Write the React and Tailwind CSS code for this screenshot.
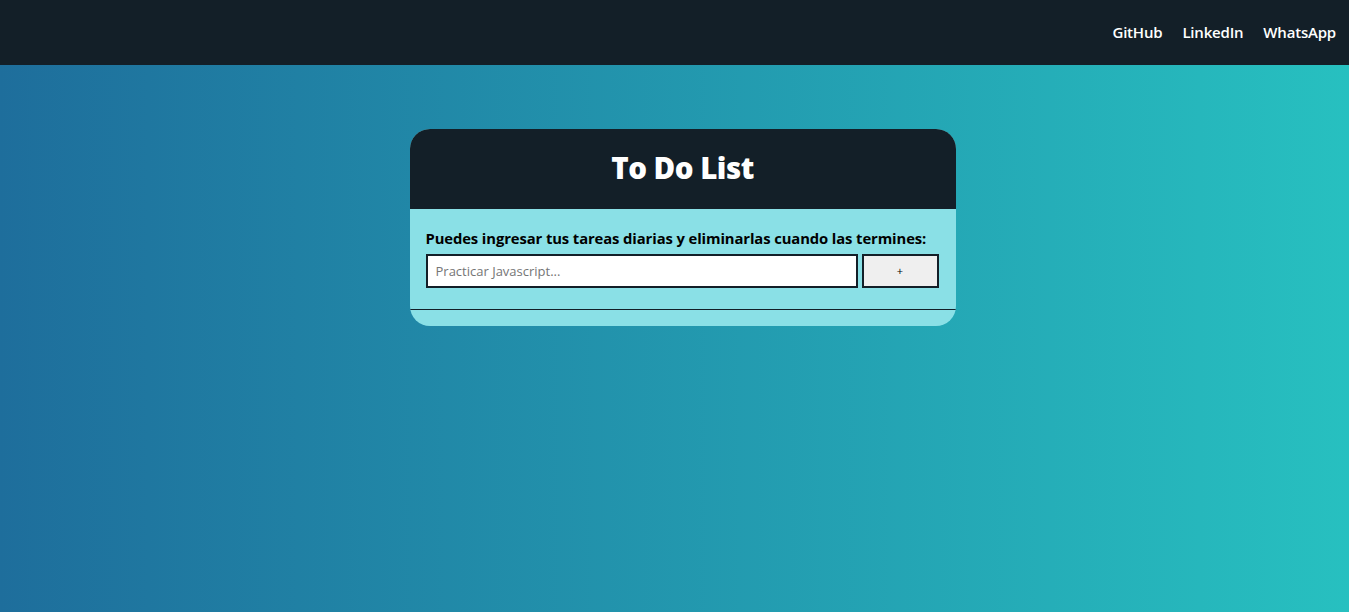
export default function App() {
  return (
    <div className="min-h-[612px] h-[612px] w-full flex flex-col bg-[linear-gradient(to_right,#1e6e9c,#27c0c0)] font-['Open_Sans',sans-serif]">
      <header className="h-[65px] shrink-0 bg-[#131f28] flex items-center justify-end pr-[13px] gap-[20px]">
        <a className="text-white text-[15px] font-semibold tracking-[-0.2px]">GitHub</a>
        <a className="text-white text-[15px] font-semibold tracking-[-0.2px]">LinkedIn</a>
        <a className="text-white text-[15px] font-semibold tracking-[-0.2px]">WhatsApp</a>
      </header>
      <main className="flex justify-center pt-[64px] pl-[16px]">
        <div className="w-[546px] rounded-[20px] overflow-hidden bg-[#8ae0e6]">
          <div className="h-[80px] bg-[#131f28] flex items-center justify-center pb-[3px]">
            <h1 className="text-white text-[29.5px] font-extrabold tracking-[-0.5px] leading-none">To Do List</h1>
          </div>
          <div className="px-[16px] pt-[19px] pb-[21px] border-b border-[#131f28]">
            <p className="text-black text-[14.8px] font-bold leading-[20px] tracking-[-0.1px] whitespace-nowrap">Puedes ingresar tus tareas diarias y eliminarlas cuando las termines:</p>
            <div className="flex gap-[4px] mt-[6px]">
              <input
                className="w-[432px] h-[34px] bg-white border-2 border-[#131f28] px-[8px] text-[13px] text-black placeholder:text-[#757575] outline-none"
                placeholder="Practicar Javascript..."
              />
              <button className="w-[77px] h-[34px] bg-[#efefef] border-2 border-[#131f28] text-[11px] text-black">+</button>
            </div>
          </div>
          <div className="h-[16px]"></div>
        </div>
      </main>
    </div>
  );
}
